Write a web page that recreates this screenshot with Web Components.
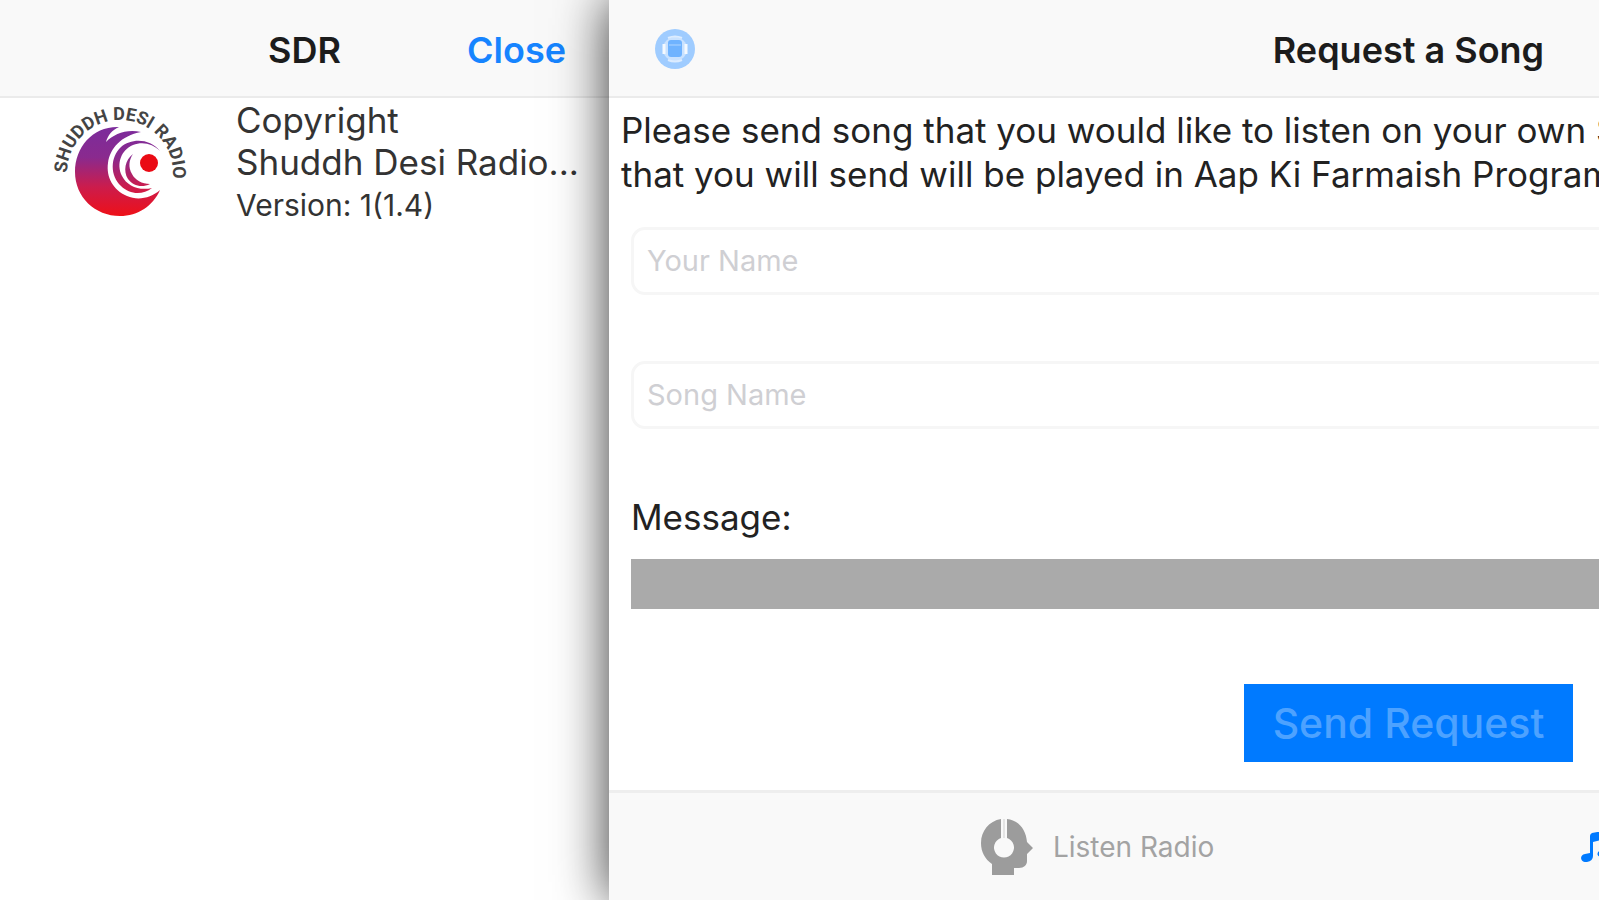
<!DOCTYPE html>
<html lang="en">
<head>
<meta charset="utf-8">
<meta name="viewport" content="width=device-width, initial-scale=1">
<title>SDR</title>
<style>
  body {
    margin: 0;
    background-color: #fff;
    font-family: Inter, "Liberation Sans", sans-serif;
  }
</style>
</head>
<body>
<radio-app></radio-app>

<script>
/**
 * Creates a template element from a string of HTML.
 *
 * @param {string} html - The markup and styles.
 * @returns {HTMLTemplateElement} - The template.
 */
function createTemplate (html) {
  const template = document.createElement('template')
  template.innerHTML = html
  return template
}

/**
 * Base class that clones the template of its subclass into a shadow root.
 */
class TemplateElement extends HTMLElement {
  constructor () {
    super()
    this.attachShadow({ mode: 'open' })
      .appendChild(this.constructor.template.content.cloneNode(true))
  }
}

/**
 * The navigation bar, with a centered title and a slot on each side.
 */
customElements.define('nav-bar',
  class extends TemplateElement {
    static template = createTemplate(`
      <style>
        :host {
          display: grid;
          grid-template-columns: 1fr auto 1fr;
          align-items: center;
          box-sizing: border-box;
          height: 98px;
          padding: 4px 43px 0;
          background-color: #f9f9f9;
          border-bottom: 2px solid #ebebeb;
        }

        h1 {
          margin: 0;
          font-size: 36px;
          line-height: 44px;
          font-weight: 600;
          color: #1c1c1c;
        }

        .end {
          justify-self: end;
        }
      </style>
      <div><slot name="start"></slot></div>
      <h1><slot></slot></h1>
      <div class="end"><slot name="end"></slot></div>
    `)
  }
)

/**
 * The round logo with the station name on an arc.
 */
customElements.define('station-logo',
  class extends TemplateElement {
    static template = createTemplate(`
      <style>
        :host {
          display: block;
          width: 136px;
          height: 120px;
        }

        svg {
          display: block;
        }

        text {
          font: 700 18px Roboto, sans-serif;
          fill: #444;
        }
      </style>
      <svg width="136" height="120" viewBox="52 99 136 120" role="img" aria-label="Logo">
        <defs>
          <linearGradient id="fill" gradientUnits="userSpaceOnUse" x1="0" y1="126" x2="0" y2="216">
            <stop offset="0" stop-color="#7b2c9c"/>
            <stop offset=".35" stop-color="#8a2a8e"/>
            <stop offset=".68" stop-color="#cc1c4c"/>
            <stop offset="1" stop-color="#ee1018"/>
          </linearGradient>
          <path id="arc" d="M67 173 A53 53 0 0 1 173 173 V190"/>
        </defs>
        <text><textPath href="#arc">SHUDDH DESI RADIO</textPath></text>
        <path fill="url(#fill)" d="M119 127 C93 126 75 147 75 172 C75 197 95 216 120 216 C138 216 153 206 160 190 C151 198 138 201 127 196 C113 190 106 177 108 163 C110 148 121 136 141 132 C126 129 114 134 106 142 C108 135 112 130 119 127Z"/>
        <path fill="url(#fill)" d="M160 151 C150 138 131 138 121 147 C110 157 110 176 121 186 C130 195 143 195 152 188 C139 191 127 186 122 176 C116 164 121 150 133 145 C143 141 153 144 160 151Z"/>
        <path fill="url(#fill)" d="M133 154 C125 160 123 171 128 179 C133 186 142 188 150 184 C142 184 135 180 132 174 C128 167 129 160 133 154Z"/>
        <circle cx="149" cy="163" r="9" fill="#ea0a14"/>
      </svg>
    `)
  }
)

/**
 * The drawer that lies behind the page and tells about the app.
 */
customElements.define('about-drawer',
  class extends TemplateElement {
    static template = createTemplate(`
      <style>
        :host {
          display: block;
          background-color: #fff;
        }

        button {
          display: block;
          padding: 0;
          border: none;
          background: none;
          font: 600 36px/44px Inter, sans-serif;
          color: #1684ff;
          cursor: pointer;
        }

        .about {
          display: flex;
          gap: 48px;
          padding: 1px 20px 0 52px;
          color: #333;
        }

        station-logo {
          flex: none;
        }

        .text {
          min-width: 0;
        }

        p {
          margin: 0;
          font-size: 35px;
          line-height: 42px;
          white-space: nowrap;
        }

        .version {
          font-size: 30px;
          line-height: 44px;
        }
      </style>
      <nav-bar>SDR<button slot="end" type="button">Close</button></nav-bar>
      <div class="about">
        <station-logo></station-logo>
        <div class="text">
          <p>Copyright</p>
          <p>Shuddh Desi Radio...</p>
          <p class="version">Version: 1(1.4)</p>
        </div>
      </div>
    `)
  }
)

/**
 * A text box that shows its label as the placeholder.
 */
customElements.define('text-field',
  class extends TemplateElement {
    static template = createTemplate(`
      <style>
        :host {
          display: block;
        }

        input {
          display: block;
          box-sizing: border-box;
          width: 100%;
          height: 68px;
          padding: 0 13px 2px;
          border: 3px solid #f6f6f6;
          border-radius: 14px;
          background-color: #fff;
          font: 29px/36px Inter, sans-serif;
          color: #333;
        }

        input::placeholder {
          color: #cfcfd3;
          opacity: 1;
        }
      </style>
      <input type="text">
    `)

    connectedCallback () {
      const input = this.shadowRoot.querySelector('input')
      input.placeholder = this.getAttribute('label')
      input.setAttribute('aria-label', this.getAttribute('label'))
    }
  }
)

/**
 * The form for requesting a song.
 */
customElements.define('request-form',
  class extends TemplateElement {
    static template = createTemplate(`
      <style>
        :host {
          display: block;
        }

        p {
          margin: 0;
          padding: 10px 12px 0;
          font-size: 35px;
          line-height: 44px;
          white-space: nowrap;
          color: #222;
        }

        form {
          display: flex;
          flex-direction: column;
          padding: 31px 22px 0;
        }

        text-field {
          margin-bottom: 66px;
        }

        label {
          font-size: 35px;
          line-height: 44px;
          color: #222;
        }

        textarea {
          height: 50px;
          margin: 20px 0 75px;
          padding: 4px 8px;
          box-sizing: border-box;
          border: none;
          border-radius: 0;
          background-color: #aaa;
          font: 29px/36px Inter, sans-serif;
          resize: none;
        }

        button {
          align-self: center;
          height: 78px;
          padding: 0 29px;
          border: none;
          background-color: #007aff;
          font: 500 41px/48px Inter, sans-serif;
          color: #4da2ff;
        }
      </style>
      <p>Please send song that you would like to listen on your own SDR. Song<br>that you will send will be played in Aap Ki Farmaish Program.</p>
      <form>
        <text-field label="Your Name"></text-field>
        <text-field label="Song Name"></text-field>
        <label for="message">Message:</label>
        <textarea id="message"></textarea>
        <button type="submit" disabled>Send Request</button>
      </form>
    `)
  }
)

/**
 * A link in the tab bar, with an icon and a label.
 */
customElements.define('tab-link',
  class extends TemplateElement {
    static template = createTemplate(`
      <style>
        :host {
          display: block;
          color: #a3a3a3;
        }

        :host([active]) {
          color: #007aff;
        }

        a {
          display: flex;
          align-items: center;
          gap: 20px;
          font-size: 28px;
          line-height: 32px;
          color: inherit;
          text-decoration: none;
          white-space: nowrap;
        }

        ::slotted(svg) {
          display: block;
        }
      </style>
      <a href="#"><slot name="icon"></slot><span><slot></slot></span></a>
    `)
  }
)

/**
 * The page that slides over the drawer and runs out of the window.
 */
customElements.define('request-page',
  class extends TemplateElement {
    static template = createTemplate(`
      <style>
        :host {
          display: flex;
          flex-direction: column;
          background-color: #fff;
          box-shadow: 0 0 50px rgba(0, 0, 0, .8);
        }

        request-form {
          flex: 1;
        }

        .menu {
          display: block;
          margin-left: 2px;
          padding: 0;
          border: none;
          background: none;
        }

        .menu svg {
          display: block;
        }

        .tabs {
          display: flex;
          justify-content: center;
          align-items: center;
          gap: 366px;
          box-sizing: border-box;
          height: 110px;
          background-color: #f9f9f9;
          border-top: 3px solid #eee;
        }
      </style>
      <nav-bar>
        <button class="menu" slot="start" type="button" aria-label="Menu">
          <svg width="42" height="42" viewBox="0 0 42 42">
            <circle cx="21" cy="20" r="20" fill="#9fccff"/>
            <circle cx="21" cy="20" r="12" fill="#c9e2ff"/>
            <path d="M10 15v10M32 15v10" stroke="#f4f9ff" stroke-width="3"/>
            <path d="M14 9q7 -3 14 0M14 31q7 3 14 0" fill="none" stroke="#dcecff" stroke-width="2"/>
            <rect x="14" y="11" width="14" height="17" rx="3" fill="#6fb3ff"/>
            <path d="M15 16h12" stroke="#8fc4ff" stroke-width="2"/>
          </svg>
        </button>
        Request a Song
      </nav-bar>
      <request-form></request-form>
      <nav class="tabs">
        <tab-link>
          <svg slot="icon" width="52" height="58" viewBox="0 0 52 58">
            <path fill="#9c9c9c" fill-rule="evenodd" d="M20 1 C8 3 0 13 0 25 C0 34 4 41 11 46 V57 H33 V50 H38 C43 50 46 47 46 43 V36 L52 30 L46 24 C45 11 37 2 26 1 V20 A10 10 0 1 1 20 20Z"/>
            <path d="M22 1h2v19h-2z" fill="#e4e4e4"/>
          </svg>
          Listen Radio
        </tab-link>
        <tab-link active>
          <svg slot="icon" width="28" height="30" viewBox="0 0 28 30">
            <path fill="#007aff" d="M10 4 Q10 2 12 1 L28 -2 V20 Q28 25 22 25 C16 25 16 19 22 18 L25 17 V7 L13 10 V24 Q13 29 7 30 C0 31 -1 23 5 22 L10 21Z"/>
          </svg>
          Request a Song
        </tab-link>
      </nav>
    `)
  }
)

/**
 * The app, with the opened drawer and the page pushed to the right.
 */
customElements.define('radio-app',
  class extends TemplateElement {
    static template = createTemplate(`
      <style>
        :host {
          display: flex;
          min-height: 100vh;
          overflow: hidden;
        }

        about-drawer {
          flex: 0 0 609px;
          min-width: 0;
        }

        request-page {
          flex: 0 0 100%;
          z-index: 1;
        }
      </style>
      <about-drawer></about-drawer>
      <request-page></request-page>
    `)
  }
)
</script>
</body>
</html>
